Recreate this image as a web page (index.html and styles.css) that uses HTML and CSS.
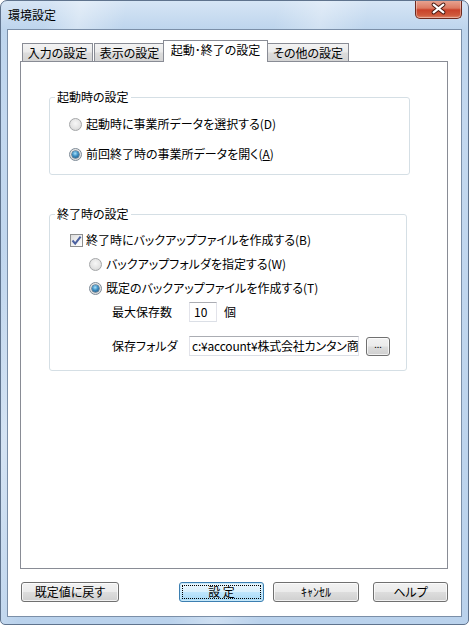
FILE: index.html
```html
<!DOCTYPE html>
<html lang="ja">
<head>
<meta charset="utf-8">
<title>環境設定</title>
<link rel="stylesheet" href="styles.css">
</head>
<body>
<div class="window">
  <div class="titlebar">
    <span class="title">環境設定</span>
    <div class="close">
      <svg width="46" height="18" viewBox="0 0 46 18">
        <path d="M18 4.5 L28 12.5 M28 4.5 L18 12.5" stroke="#4a1a12" stroke-width="4.2" stroke-linecap="round" fill="none"/>
        <path d="M18 4.5 L28 12.5 M28 4.5 L18 12.5" stroke="#ffffff" stroke-width="2.2" stroke-linecap="round" fill="none"/>
      </svg>
    </div>
  </div>
  <div class="client">
    <div class="tabs">
      <div class="tab t1">入力の設定</div>
      <div class="tab t2">表示の設定</div>
      <div class="tab active">起動･終了の設定</div>
      <div class="tab t4">その他の設定</div>
    </div>
    <div class="panel">
      <fieldset class="group g1">
        <legend>起動時の設定</legend>
        <div class="row r30"><span class="radio"></span><span class="lbl">起動時に事業所データを選択する(D)</span></div>
        <div class="row r30"><span class="radio on"></span><span class="lbl">前回終了時の事業所データを開く(<u>A</u>)</span></div>
      </fieldset>
      <fieldset class="group g2">
        <legend>終了時の設定</legend>
        <div class="row chkrow"><span class="check"><svg width="11" height="11" viewBox="0 0 11 11"><path d="M1.5 5.5 L4.2 8.6 L9.6 1.6" stroke="#4b61a0" stroke-width="2" fill="none"/></svg></span><span class="lbl">終了時にバックアップファイルを作成する(B)</span></div>
        <div class="row subrow"><span class="radio"></span><span class="lbl">バックアップフォルダを指定する(W)</span></div>
        <div class="row subrow"><span class="radio on"></span><span class="lbl">既定のバックアップファイルを作成する(T)</span></div>
        <div class="row field first">
          <span class="flabel">最大保存数</span>
          <div class="input small">10</div>
          <span class="unit">個</span>
        </div>
        <div class="row field">
          <span class="flabel">保存フォルダ</span>
          <div class="input wide"><span class="itext">c:¥account¥株式会社カンタン商事</span></div>
          <div class="btn dots">...</div>
        </div>
      </fieldset>
    </div>
    <div class="buttons">
      <div class="btn b1">既定値に戻す</div>
      <div class="btn b2 default">設 定</div>
      <div class="btn b3">ｷｬﾝｾﾙ</div>
      <div class="btn b4">ヘルプ</div>
    </div>
  </div>
</div>
</body>
</html>
```
FILE: styles.css
```css
* { box-sizing: border-box; }
html, body { margin: 0; padding: 0; }
body {
  width: 469px;
  height: 625px;
  overflow: hidden;
  font-family: "Noto Sans CJK JP", "Noto Sans", sans-serif;
  font-size: 12px;
  font-feature-settings: "palt";
  color: #000;
  background: #fff;
}
.window {
  width: 469px;
  height: 625px;
  border: 1px solid #5f738d;
  border-radius: 7px 7px 5px 5px;
  display: flex;
  flex-direction: column;
  background:
    linear-gradient(100deg, rgba(255,255,255,0) 8%, rgba(255,255,255,0.35) 14%, rgba(255,255,255,0) 22%, rgba(255,255,255,0) 48%, rgba(255,255,255,0.3) 56%, rgba(255,255,255,0) 64%),
    linear-gradient(to bottom, #d6e5f5 0px, #bed5ed 28px, #c3d8ef 120px, #bad2ec 100%);
  overflow: hidden;
}
.titlebar {
  height: 28px;
  display: flex;
  align-items: center;
  padding-left: 7px;
  flex: none;
}
.title {
  font-size: 12px;
  line-height: 14px;
  color: #000;
}
.close {
  margin-left: auto;
  margin-right: 6px;
  align-self: flex-start;
  width: 47px;
  height: 19px;
  margin-top: -1px;
  border: 1px solid #6e2a1e;
  border-top: none;
  border-radius: 0 0 5px 5px;
  background: linear-gradient(to bottom, #e9a896 0%, #dc7a62 45%, #c9422a 55%, #cf5a3c 85%, #e08b6e 100%);
  box-shadow: inset 0 0 0 1px rgba(255,255,255,0.35);
  display: flex;
  align-items: center;
  justify-content: center;
}
.close svg { display: block; }
.client {
  flex: 1;
  margin: 0 6px 7px 6px;
  border: 1px solid #7b8fa8;
  background: #fff;
  padding: 10px 13px 0 12px;
  display: flex;
  flex-direction: column;
}
.tabs {
  height: 21px;
  display: flex;
  align-items: flex-end;
  padding-left: 2px;
}
.tab {
  height: 18px;
  border: 1px solid #898c95;
  border-bottom: none;
  background: linear-gradient(to bottom, #f3f3f3 0%, #ebebeb 45%, #dcdcdc 55%, #d4d4d4 100%);
  display: flex;
  align-items: center;
  justify-content: center;
  line-height: 14px;
  white-space: nowrap;
}
.t1 { width: 71px; }
.t2 { width: 71px; margin-left: 1px; }
.tab.active {
  width: 105px;
  height: 22px;
  margin-left: -2px;
  margin-bottom: -1px;
  background: #fff;
  position: relative;
  z-index: 1;
  padding-bottom: 3px;
}
.t4 { width: 82px; margin-left: -1px; }
.panel {
  height: 508px;
  border: 1px solid #898c95;
  background: #fff;
  flex: none;
}
.group {
  margin: 0;
  padding: 0;
  border: 1px solid #d5dfe5;
  border-radius: 3px;
  min-width: 0;
}
.group legend {
  padding: 0 2px;
  margin-left: 5px;
  line-height: 14px;
}
.g1 {
  width: 361px;
  margin: 28px 0 0 28px;
  padding: 5px 0 5px 0;
}
.g2 {
  width: 358px;
  margin: 32px 0 0 28px;
  padding: 7px 0 14px 0;
}
.row {
  display: flex;
  align-items: center;
  white-space: nowrap;
}
.lbl { line-height: 14px; }
.r30 { height: 30px; padding-left: 19px; }
.r30 .radio { margin-right: 4px; }
.chkrow { height: 24px; padding-left: 20px; }
.subrow { height: 24px; padding-left: 39px; }
.subrow .radio { margin-right: 4px; }
.radio {
  width: 13px;
  height: 13px;
  border-radius: 50%;
  border: 1px solid #a4a6a8;
  background: radial-gradient(circle at 50% 40%, #f7f7f7 0%, #e4e4e4 55%, #cfcfcf 100%);
  flex: none;
  display: flex;
  align-items: center;
  justify-content: center;
}
.radio.on { border-color: #7d8a96; }
.radio.on::after {
  content: "";
  width: 7px;
  height: 7px;
  border-radius: 50%;
  background: radial-gradient(circle at 45% 35%, #a9e2fb 0%, #3d8fc4 45%, #15476f 100%);
  box-shadow: 0 0 0 0.5px #1c4260;
}
.check {
  width: 13px;
  height: 13px;
  border: 1px solid #8e8f8f;
  background: linear-gradient(135deg, #dcdcdc 0%, #f4f4f4 60%, #ffffff 100%);
  flex: none;
  margin-right: 3px;
  display: flex;
  align-items: center;
  justify-content: center;
}
.check svg { display: block; }
.field { height: 20px; padding-left: 62px; }
.field.first { margin-top: 2px; }
.field + .field { margin-top: 14px; }
.flabel { width: 77px; flex: none; line-height: 14px; }
.input {
  height: 20px;
  border: 1px solid #dbdfe6;
  border-top-color: #abadb3;
  border-left-color: #e2e3ea;
  border-right-color: #e2e3ea;
  background: #fff;
  padding: 0 0 0 3px;
  line-height: 18px;
  overflow: hidden;
  white-space: nowrap;
  flex: none;
}
.input.small { width: 28px; padding-left: 4px; }
.input.wide { width: 170px; padding-left: 2px; }
.itext { letter-spacing: -0.2px; }
.unit { margin-left: 7px; line-height: 14px; }
.btn {
  border: 1px solid #707070;
  border-radius: 3px;
  background: linear-gradient(to bottom, #f2f2f2 0%, #ebebeb 48%, #dddddd 52%, #cfcfcf 100%);
  box-shadow: inset 0 0 0 1px rgba(255,255,255,0.7);
  display: flex;
  align-items: center;
  justify-content: center;
  line-height: 14px;
  white-space: nowrap;
  flex: none;
}
.dots {
  width: 24px;
  height: 19px;
  margin-left: 7px;
  font-size: 9px;
  padding-bottom: 2px;
}
.buttons {
  display: flex;
  margin-top: 13px;
  padding-left: 1px;
}
.buttons .btn { height: 20px; }
.b1 { width: 98px; }
.b2 { width: 85px; margin-left: 60px; }
.b3 { width: 86px; margin-left: 9px; }
.b4 { width: 75px; margin-left: 14px; }
.btn.default {
  border-color: #3c7fb1;
  background: linear-gradient(to bottom, #eaf6fd 0%, #d9f0fc 48%, #bee6fd 52%, #a7d9f5 100%);
  box-shadow: inset 0 0 0 1px #c7e8f9;
  outline: 1px dotted #000;
  outline-offset: -4px;
}
```
